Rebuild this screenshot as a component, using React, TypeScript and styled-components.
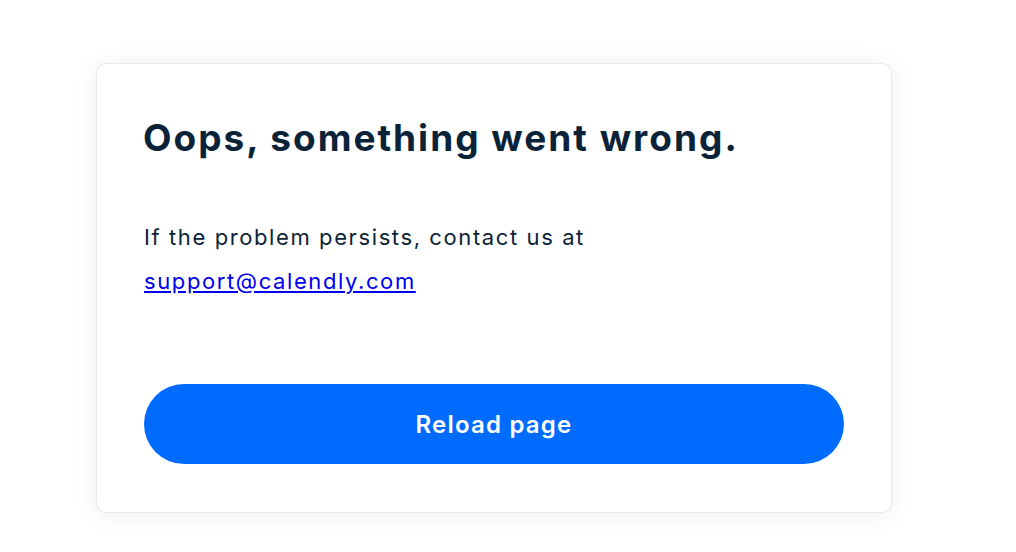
import styled, { createGlobalStyle } from "styled-components";

const GlobalStyle = createGlobalStyle`
  html, body {
    margin: 0;
    padding: 0;
    background: #ffffff;
    font-family: Inter, "Open Sans", sans-serif;
  }
`;

const Page = styled.div`
  width: 1016px;
  height: 552px;
  box-sizing: border-box;
  padding: 63px 0 0 96px;
  background: #ffffff;
`;

const Card = styled.div`
  width: 796px;
  box-sizing: border-box;
  padding: 49px 48px;
  background: #ffffff;
  border-radius: 10px;
  box-shadow: inset 0 0 0 1px #e8e8e8, 0 2px 24px rgba(0, 0, 0, 0.07);
  display: flex;
  flex-direction: column;
`;

const Title = styled.h1`
  margin: 0 0 0 -1px;
  font-size: 37px;
  line-height: 52px;
  font-weight: 700;
  letter-spacing: 2px;
  color: #0b2339;
`;

const Message = styled.p`
  margin: 51px 0 0;
  font-size: 22px;
  line-height: 44px;
  letter-spacing: 1.6px;
  color: #0b2339;

  a {
    color: #0000ee;
    text-decoration: underline;
  }
`;

const ReloadButton = styled.button`
  margin-top: 81px;
  height: 80px;
  width: 100%;
  border: none;
  border-radius: 40px;
  background: #006bff;
  color: #ffffff;
  font-family: inherit;
  font-size: 24px;
  font-weight: 600;
  letter-spacing: 1.2px;
  cursor: pointer;
`;

const App = () => {
  return (
    <>
      <GlobalStyle />
      <Page>
        <Card>
          <Title>Oops, something went wrong.</Title>
          <Message>
            If the problem persists, contact us at
            <br />
            <a href="mailto:support@calendly.com">support@calendly.com</a>
          </Message>
          <ReloadButton>Reload page</ReloadButton>
        </Card>
      </Page>
    </>
  );
};

export default App;
